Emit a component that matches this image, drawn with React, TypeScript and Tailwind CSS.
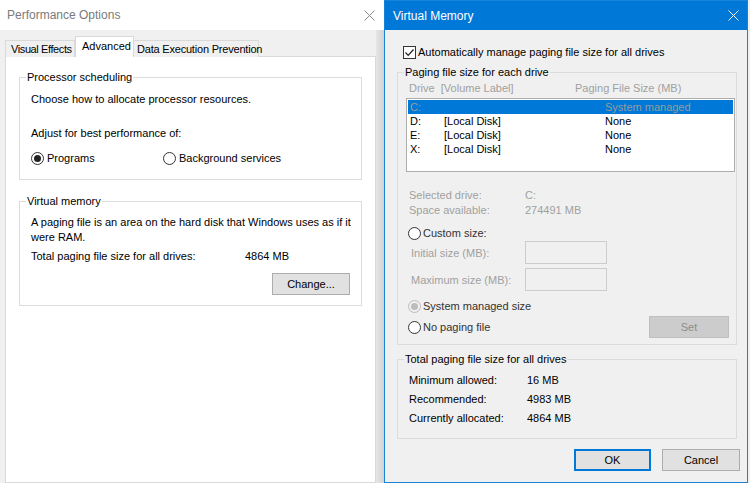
import React from "react";

function CloseIcon({ color }: { color: string }) {
  return (
    <svg width="11" height="11" viewBox="0 0 11 11" className="shrink-0">
      <path d="M0.5 0.5 L10.5 10.5 M10.5 0.5 L0.5 10.5" stroke={color} strokeWidth="1" fill="none" />
    </svg>
  );
}

function Radio({ checked, disabled }: { checked?: boolean; disabled?: boolean }) {
  return (
    <span
      className={
        disabled
          ? "flex h-[13px] w-[13px] shrink-0 items-center justify-center rounded-full border border-[#bcbcbc] bg-[#f0f0f0]"
          : "flex h-[13px] w-[13px] shrink-0 items-center justify-center rounded-full border border-[#333333] bg-white"
      }
    >
      {checked && (
        <span className={disabled ? "h-[7px] w-[7px] rounded-full bg-[#bcbcbc]" : "h-[7px] w-[7px] rounded-full bg-[#222222]"} />
      )}
    </span>
  );
}

function Checkbox() {
  return (
    <span className="flex h-[13px] w-[13px] shrink-0 items-center justify-center border border-[#333333] bg-white">
      <svg width="11" height="11" viewBox="0 0 11 11">
        <path d="M1.5 5.5 L4.2 8.3 L9.5 2.5" stroke="#222" strokeWidth="1.2" fill="none" />
      </svg>
    </span>
  );
}

function Button({ children, primary, className = "" }: { children: React.ReactNode; primary?: boolean; className?: string }) {
  return (
    <div
      className={
        (primary
          ? "flex items-center justify-center border-2 border-[#0078d7] bg-[#e1e1e1] "
          : "flex items-center justify-center border border-[#adadad] bg-[#e1e1e1] ") + className
      }
    >
      {children}
    </div>
  );
}

function PerformanceOptions() {
  return (
    <div className="flex h-full w-[384px] shrink-0 flex-col bg-[#f0f0f0]">
      <div className="flex h-[30px] shrink-0 items-center justify-between bg-white pl-[7px] pr-[9px] text-[12px] text-[#7a7a7a]">
        <span>Performance Options</span>
        <CloseIcon color="#8a8a8a" />
      </div>
      <div className="flex min-h-0 flex-1">
        <div className="flex w-[376px] flex-col pl-[5px] pt-[6px]">
          <div className="relative z-10 -mb-px flex h-[21px] items-end whitespace-nowrap">
            <div className="flex h-[17px] w-[70px] items-center overflow-hidden border border-b-0 border-[#d9d9d9] bg-[#f0f0f0] pl-[5px] tracking-[-0.4px]">
              Visual Effects
            </div>
            <div className="flex h-[21px] w-[59px] items-center border border-b-0 border-[#d9d9d9] bg-white pb-[3px] pl-[6px]">
              Advanced
            </div>
            <div className="flex h-[17px] w-[125px] items-center border border-b-0 border-l-0 border-[#d9d9d9] bg-[#f0f0f0] pl-[3px] tracking-[-0.2px]">
              Data Execution Prevention
            </div>
          </div>
          <div className="flex flex-1 flex-col border border-[#d9d9d9] bg-white px-[13px] pt-[12px]">
            <fieldset className="flex flex-col border border-[#dcdcdc] pb-[13px] pl-[11px]">
              <legend className="ml-[-5px] px-[1px]">Processor scheduling</legend>
              <div className="mt-[6px]">Choose how to allocate processor resources.</div>
              <div className="mt-[18px]">Adjust for best performance of:</div>
              <div className="mt-[9px] flex h-[16px] items-center">
                <div className="flex w-[132px] items-center gap-[3px]">
                  <Radio checked />
                  <span>Programs</span>
                </div>
                <div className="flex items-center gap-[3px]">
                  <Radio />
                  <span>Background services</span>
                </div>
              </div>
            </fieldset>
            <fieldset className="mt-[13px] flex flex-col border border-[#dcdcdc] pb-[10px] pl-[11px]">
              <legend className="ml-[-5px] px-[1px]">Virtual memory</legend>
              <div className="mt-[6px] whitespace-nowrap leading-[15px]">
                A paging file is an area on the hard disk that Windows uses as if it
                <br />
                were RAM.
              </div>
              <div className="mt-[3px] flex">
                <span className="w-[214px]">Total paging file size for all drives:</span>
                <span>4864 MB</span>
              </div>
              <Button className="mr-[11px] mt-[9px] h-[22px] w-[78px] self-end">Change...</Button>
            </fieldset>
          </div>
        </div>
        <div className="w-[8px] bg-gradient-to-r from-[#e6e6e6] to-[#d2d2d2]" />
      </div>
    </div>
  );
}

function VirtualMemory() {
  const drives = [
    { d: "C:", label: "", size: "System managed", selected: true },
    { d: "D:", label: "[Local Disk]", size: "None" },
    { d: "E:", label: "[Local Disk]", size: "None" },
    { d: "X:", label: "[Local Disk]", size: "None" },
  ];
  return (
    <div className="flex h-[483px] w-[364px] shrink-0 flex-col border border-[#1883d7] bg-[#f0f0f0]">
      <div className="flex h-[29px] shrink-0 items-center justify-between bg-[#0078d7] pl-[8px] pr-[8px] text-[12px] text-white">
        <span>Virtual Memory</span>
        <CloseIcon color="#ffffff" />
      </div>
      <div className="flex flex-1 flex-col">
        <div className="ml-[18px] mt-[14px] flex h-[16px] items-center gap-[2px]">
          <Checkbox />
          <span>Automatically manage paging file size for all drives</span>
        </div>

        <fieldset className="ml-[12px] mr-[10px] mt-[4px] flex flex-col border border-[#dcdcdc] pb-[6px]">
          <legend className="ml-[6px] px-[1px]">Paging file size for each drive</legend>
          <div className="flex pl-[11px] text-[#a0a0a0]">
            <span className="w-[166px] whitespace-pre">Drive  [Volume Label]</span>
            <span>Paging File Size (MB)</span>
          </div>
          <div className="ml-[8px] mr-[1px] mt-[2px] h-[74px] border border-[#adadad] bg-white p-px">
            {drives.map((r) => (
              <div
                key={r.d}
                className={
                  r.selected
                    ? "flex h-[14px] items-center bg-[#0078d7] pl-[2px] leading-[14px] text-[#9a9a9a]"
                    : "flex h-[14px] items-center pl-[2px] leading-[14px]"
                }
              >
                <span className="w-[34px]">{r.d}</span>
                <span className="w-[161px]">{r.label}</span>
                <span>{r.size}</span>
              </div>
            ))}
          </div>

          <div className="mt-[16px] flex flex-col pl-[11px] leading-[15px] text-[#a0a0a0]">
            <div className="flex">
              <span className="w-[116px]">Selected drive:</span>
              <span>C:</span>
            </div>
            <div className="flex">
              <span className="w-[116px]">Space available:</span>
              <span>274491 MB</span>
            </div>
          </div>

          <div className="mt-[7px] flex h-[16px] items-center gap-[2px] pl-[10px] text-[#333333]">
            <Radio />
            <span>Custom size:</span>
          </div>
          <div className="flex h-[23px] items-center pl-[13px] text-[#a0a0a0]">
            <span className="w-[114px]">Initial size (MB):</span>
            <div className="h-[23px] w-[82px] border border-[#cccccc] bg-[#f0f0f0]" />
          </div>
          <div className="mt-[4px] flex h-[23px] items-center pl-[13px] text-[#a0a0a0]">
            <span className="w-[114px]">Maximum size (MB):</span>
            <div className="h-[23px] w-[82px] border border-[#cccccc] bg-[#f0f0f0]" />
          </div>
          <div className="mt-[7px] flex h-[16px] items-center gap-[2px] pl-[10px] text-[#333333]">
            <Radio checked disabled />
            <span>System managed size</span>
          </div>
          <div className="mt-[2px] flex h-[22px] items-center pl-[10px] pr-[7px] text-[#333333]">
            <div className="flex flex-1 items-center gap-[2px]">
              <Radio />
              <span>No paging file</span>
            </div>
            <div className="flex h-[22px] w-[80px] items-center justify-center border border-[#bfbfbf] bg-[#cccccc] text-[#8c8c8c]">
              Set
            </div>
          </div>
        </fieldset>

        <fieldset className="ml-[12px] mr-[10px] mt-[6px] flex flex-col border border-[#dcdcdc] pb-[10px] pl-[11px]">
          <legend className="ml-[-5px] px-[1px]">Total paging file size for all drives</legend>
          <div className="mt-[4px] flex flex-col leading-[19px]">
            <div className="flex">
              <span className="w-[118px]">Minimum allowed:</span>
              <span>16 MB</span>
            </div>
            <div className="flex">
              <span className="w-[118px]">Recommended:</span>
              <span>4983 MB</span>
            </div>
            <div className="flex">
              <span className="w-[118px]">Currently allocated:</span>
              <span>4864 MB</span>
            </div>
          </div>
        </fieldset>

        <div className="mr-[7px] mt-[10px] flex justify-end gap-[11px]">
          <Button primary className="h-[22px] w-[77px]">OK</Button>
          <Button className="h-[22px] w-[78px]">Cancel</Button>
        </div>
      </div>
    </div>
  );
}

export default function App() {
  return (
    <div className="flex h-[483px] w-[750px] overflow-hidden bg-white font-['Liberation_Sans',Arial,sans-serif] text-[11px] leading-[16px] text-black">
      <PerformanceOptions />
      <VirtualMemory />
      <div className="flex-1 bg-[#f0f0f0]" />
    </div>
  );
}
